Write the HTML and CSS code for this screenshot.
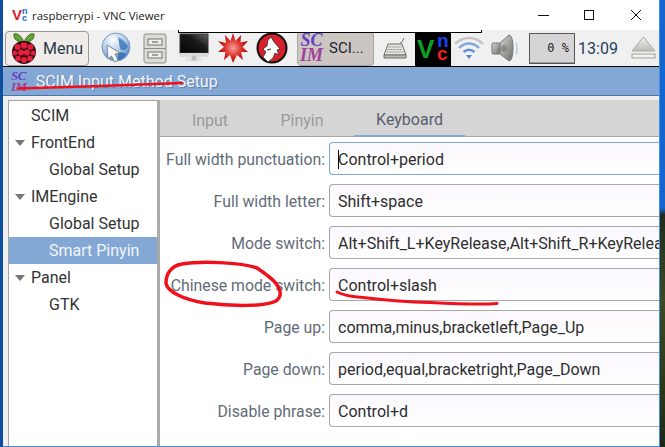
FILE: index.html
```html
<!DOCTYPE html>
<html>
<head>
<title>SCIM Input Method Setup</title>
<link rel="stylesheet" href="styles.css">
</head>
<body>
<div class="screen">
  <div class="vnc">
    <div class="titlebar">
      <span class="vnc-logo"><span class="vnc-v">V</span><span class="vnc-nc"><span>n</span><span>c</span></span></span>
      <span class="titlebar-text">raspberrypi - VNC Viewer</span>
      <div class="win-buttons">
        <svg width="46" height="20" viewBox="0 0 46 20"><path d="M0 10.5H11" stroke="#111" fill="none"/></svg>
        <svg width="46" height="20" viewBox="0 0 46 20"><rect x="0.5" y="5.5" width="9" height="9" stroke="#111" fill="none"/></svg>
        <svg width="12" height="20" viewBox="0 0 12 20"><path d="M1 5L11 15M11 5L1 15" stroke="#111" fill="none"/></svg>
      </div>
    </div>

    <div class="panel">
      <div class="remote-edge"></div>
      <button class="menu-btn">
        <svg width="26" height="33" viewBox="0 0 26 33">
          <path d="M13 10C10 3 6 1 3 2C2 7 7 11 13 10ZM13 10C16 3 20 1 23 2C24 7 19 11 13 10Z" fill="#62a632" stroke="#24470f" stroke-width="0.7"/>
          <path d="M13 9C20 9 25 13 25 20C25 27 19 32 13 32C7 32 1 27 1 20C1 13 6 9 13 9Z" fill="#2a0a0e"/>
          <g fill="#e41e3c">
            <circle cx="13" cy="13.500" r="3.300"/><circle cx="6.500" cy="15" r="3"/><circle cx="19.500" cy="15" r="3"/>
            <circle cx="3.800" cy="21" r="2.500"/><circle cx="22.200" cy="21" r="2.500"/><circle cx="10" cy="20.500" r="3.100"/>
            <circle cx="16" cy="20.500" r="3.100"/><circle cx="7" cy="26.500" r="2.800"/><circle cx="19" cy="26.500" r="2.800"/><circle cx="13" cy="28" r="3"/>
          </g>
        </svg>
        <span>Menu</span>
      </button>

      <div class="slot">
        <svg width="32" height="32" viewBox="0 0 32 32">
          <defs><radialGradient id="globe" cx="0.4" cy="0.25" r="0.85"><stop offset="0" stop-color="#ffffff"/><stop offset="0.55" stop-color="#a8c6e6"/><stop offset="1" stop-color="#2f6db4"/></radialGradient></defs>
          <circle cx="16" cy="15" r="14" fill="url(#globe)" stroke="#7f9dc0"/>
          <path d="M18 5C22 7 25 10 28 14C26 18 23 19 21 18C19 15 19 9 18 5Z" fill="#2f6db4" opacity="0.75"/>
          <path d="M18 20C22 20 25 21 26 22C24 26 21 27 18 28Z" fill="#2f6db4" opacity="0.8"/>
          <path d="M7 13L20 21L15 22L18 28L14.500 30L11.500 24L8 27Z" fill="#f6f6f6" stroke="#68727c" stroke-width="0.8"/>
        </svg>
      </div>
      <div class="slot">
        <svg width="24" height="31" viewBox="0 0 24 31">
          <rect x="1" y="1" width="22" height="29" rx="2" fill="#dcdcd6" stroke="#8d8d86"/>
          <path d="M1 15.500H23" stroke="#8d8d86"/>
          <rect x="5" y="6" width="14" height="6" fill="#eeeeea" stroke="#77776f"/>
          <rect x="5" y="19" width="14" height="6" fill="#eeeeea" stroke="#77776f"/>
          <path d="M9 9H15M9 22H15" stroke="#55554f"/>
        </svg>
      </div>
      <div class="slot">
        <svg width="30" height="30" viewBox="0 0 30 30">
          <defs><linearGradient id="scr" x1="0" y1="1" x2="1" y2="0"><stop offset="0" stop-color="#050505"/><stop offset="0.6" stop-color="#1a1a1a"/><stop offset="1" stop-color="#6a6a6a"/></linearGradient></defs>
          <rect x="1" y="1" width="28" height="19" fill="url(#scr)" stroke="#333"/>
          <rect x="1" y="20" width="28" height="4" fill="#dcdcdc"/>
          <ellipse cx="15" cy="26.500" rx="9" ry="2.500" fill="#e2e2e2"/>
          <circle cx="15" cy="25" r="2.500" fill="#bdbdbd"/>
        </svg>
      </div>
      <div class="slot">
        <svg width="32" height="32" viewBox="0 0 32 32">
          <defs><radialGradient id="burst"><stop offset="0" stop-color="#f4a09a"/><stop offset="0.6" stop-color="#dc2a26"/><stop offset="1" stop-color="#a80f10"/></radialGradient></defs>
          <path d="M16 1L18.500 9L24 3L23.500 10.500L31 9L25.500 15L31 20L24 20L26 28L20 23L16 31L13 23L7 28L8.500 20L1 20L7 15L1 9L9 11L8 3L13.500 9Z" fill="url(#burst)"/>
        </svg>
      </div>
      <div class="slot">
        <svg width="32" height="32" viewBox="0 0 32 32">
          <circle cx="16" cy="16" r="14.500" fill="#d8202c" stroke="#111" stroke-width="2"/>
          <path d="M15 5L18 10L24 17L21 18L23 23L19 21L17 26L12 30L7 25L10 20L7 17L11 14L12 8Z" fill="#fff" stroke="#222" stroke-width="0.7"/>
          <path d="M11 18L15 17" stroke="#222"/>
        </svg>
      </div>

      <button class="task-btn">
        <span class="scim-logo"><span>SC</span><span class="scim-im">IM</span></span>
        <span class="task-label">SCI...</span>
      </button>

      <div class="slot slot-keyboard">
        <svg width="24" height="22" viewBox="0 0 24 22">
          <path d="M17 6C20 6 20 2 21 1" stroke="#666" fill="none"/>
          <path d="M5 7H19L23 18H1Z" fill="#e6e6e2" stroke="#6e6e6a"/>
          <path d="M1 18H23V21H1Z" fill="#bcbcb6" stroke="#6e6e6a"/>
          <path d="M5.500 10H18.500M4.500 12.500H19.500M3.500 15H20.500" stroke="#8a8a84" stroke-dasharray="2 1"/>
        </svg>
      </div>

      <div class="vnc-tray">
        <span class="tray-v">V</span>
        <span class="tray-nc"><span class="tray-n">n</span><span class="tray-c">c</span></span>
      </div>

      <div class="slot slot-wifi">
        <svg width="30" height="26" viewBox="0 0 30 26">
          <path d="M1 9C9 1 21 1 29 9" stroke="#c4c4c4" stroke-width="2.400" fill="none"/>
          <path d="M5 13C11 7 19 7 25 13" stroke="#7ba6dc" stroke-width="2.400" fill="none"/>
          <path d="M9.500 17C13 14 17 14 20.500 17" stroke="#5f92d3" stroke-width="2.400" fill="none"/>
          <path d="M12 20H18L15 24Z" fill="#4f86cc"/>
        </svg>
      </div>
      <div class="slot slot-speaker">
        <svg width="28" height="28" viewBox="0 0 28 28">
          <defs><linearGradient id="spk" x1="0" y1="0" x2="1" y2="1"><stop offset="0" stop-color="#d8d8d4"/><stop offset="1" stop-color="#6c6c68"/></linearGradient></defs>
          <rect x="1" y="9" width="8" height="11" rx="1" fill="url(#spk)" stroke="#777"/>
          <path d="M9 9L18 1C21 1 22 8 22 14C22 20 21 27 18 27L9 20Z" fill="url(#spk)" stroke="#777"/>
          <ellipse cx="13" cy="14.500" rx="3" ry="3.500" fill="#8a8a86"/>
          <path d="M25 9C26.500 12 26.500 17 25 20" stroke="#a8c6ea" stroke-width="1.500" fill="none"/>
        </svg>
      </div>

      <div class="cpu">
        <span>0 %</span>
      </div>
      <div class="clock">13:09</div>
      <div class="eject">
        <svg width="25" height="24" viewBox="0 0 25 24">
          <defs><linearGradient id="ej" x1="0" y1="0" x2="0" y2="1"><stop offset="0" stop-color="#f2f2ee"/><stop offset="1" stop-color="#b8bcb4"/></linearGradient></defs>
          <path d="M12.500 1L24 15H1Z" fill="url(#ej)" stroke="#a8a8a4"/>
          <rect x="1" y="18" width="23" height="4" fill="#f0f0ec" stroke="#a0a09c"/>
        </svg>
      </div>
    </div>

    <div class="app-title">
      <span class="scim-logo scim-small"><span>SC</span><span class="scim-im">IM</span></span>
      <span class="app-title-text">SCIM Input Method Setup</span>
    </div>

    <div class="app-body">
      <div class="sidebar">
        <div class="tree-row"><span class="tree-text">SCIM</span></div>
        <div class="tree-row"><span class="arrow"></span><span class="tree-text">FrontEnd</span></div>
        <div class="tree-row tree-child"><span class="tree-text">Global Setup</span></div>
        <div class="tree-row"><span class="arrow"></span><span class="tree-text">IMEngine</span></div>
        <div class="tree-row tree-child"><span class="tree-text">Global Setup</span></div>
        <div class="tree-row tree-child selected"><span class="tree-text">Smart Pinyin</span></div>
        <div class="tree-row"><span class="arrow"></span><span class="tree-text">Panel</span></div>
        <div class="tree-row tree-child"><span class="tree-text">GTK</span></div>
      </div>

      <div class="content">
        <div class="tabs">
          <div class="tab tab-input">Input</div>
          <div class="tab tab-pinyin">Pinyin</div>
          <div class="tab tab-keyboard">Keyboard</div>
        </div>
        <div class="form">
          <div class="form-row">
            <label>Full width punctuation:</label>
            <div class="entry focused"><span class="caret"></span>Control+period</div>
          </div>
          <div class="form-row">
            <label>Full width letter:</label>
            <div class="entry">Shift+space</div>
          </div>
          <div class="form-row">
            <label>Mode switch:</label>
            <div class="entry">Alt+Shift_L+KeyRelease,Alt+Shift_R+KeyRelease</div>
          </div>
          <div class="form-row">
            <label>Chinese mode switch:</label>
            <div class="entry">Control+slash</div>
          </div>
          <div class="form-row">
            <label>Page up:</label>
            <div class="entry">comma,minus,bracketleft,Page_Up</div>
          </div>
          <div class="form-row">
            <label>Page down:</label>
            <div class="entry">period,equal,bracketright,Page_Down</div>
          </div>
          <div class="form-row">
            <label>Disable phrase:</label>
            <div class="entry">Control+d</div>
          </div>
        </div>
      </div>
    </div>
  </div>

  <!-- red pen marks drawn over the screenshot -->
  <svg class="marks" width="665" height="447" viewBox="0 0 665 447">
    <path d="M18 88.500C70 87 130 85 182 83" stroke="#f0101c" stroke-width="2.500" fill="none" stroke-linecap="round"/>
    <path d="M257 268C240 262 200 261 182 264C170 266 166 275 166 283C167 292 185 300 205 303C230 306 265 307 276 301C284 295 280 285 268 276C263 272 260 270 257 268" stroke="#f0101c" stroke-width="3.500" fill="none" stroke-linecap="round"/>
    <path d="M337 292C345 296 355 297 363 297.500C385 300 410 302 430 302.500C450 303.500 480 305 497 303.500" stroke="#f0101c" stroke-width="3" fill="none" stroke-linecap="round"/>
  </svg>
</div>
</body>
</html>
```

FILE: styles.css
```css
html, body {
  margin: 0;
  padding: 0;
  overflow: hidden;
}
body {
  width: 665px;
  height: 447px;
  font-family: Roboto, sans-serif;
  font-size: 16px;
  color: #333;
}
button {
  font: inherit;
  color: inherit;
  padding: 0;
}
.screen {
  position: relative;
  width: 665px;
  height: 447px;
  box-sizing: border-box;
  padding: 0 6px 0 3px;
  background:
    linear-gradient(to right, #0d4f9e 0, #0d4f9e 3px, transparent 3px),
    linear-gradient(to bottom, #1167cf 0, #1167cf 208px, #1d2a1e 215px, #3a4a26 300px, #2b3a1c 380px, #1a2a1a 447px);
}
.vnc {
  width: 656px;
  height: 446px;
  background: #efefef;
  display: flex;
  flex-direction: column;
  border-bottom: 1px solid #4a8be0;
  border-right: 1px solid #4a8be0;
  box-sizing: content-box;
  margin-right: -1px;
}

/* windows title bar */
.titlebar {
  height: 30px;
  background: #fff;
  display: flex;
  align-items: center;
  padding-left: 9px;
  flex-shrink: 0;
}
.vnc-logo {
  display: flex;
  width: 17px;
  font-family: "Liberation Sans", sans-serif;
  font-weight: bold;
}
.vnc-v {
  color: #d8202c;
  font-size: 15px;
  line-height: 16px;
}
.vnc-nc {
  display: flex;
  flex-direction: column;
  color: #2062c8;
  font-size: 9px;
  line-height: 7px;
  padding-top: 1px;
}
.titlebar-text {
  font-family: "Open Sans", sans-serif;
  font-size: 11.4px;
  color: #222;
  margin-left: 3px;
}
.win-buttons {
  margin-left: auto;
  display: flex;
  padding-right: 17px;
  align-items: center;
}

/* raspbian panel */
.panel {
  position: relative;
  height: 36px;
  background: #f0f0f0;
  border-bottom: 1px solid #000;
  display: flex;
  align-items: center;
  padding-left: 2px;
  flex-shrink: 0;
}
.remote-edge {
  position: absolute;
  left: 175px;
  top: 0;
  width: 304px;
  height: 3px;
  background: #fff;
  border: 1px solid #000;
  border-width: 0 1px 1px 1px;
  box-sizing: border-box;
}
.menu-btn {
  width: 84px;
  height: 35px;
  background: #efecea;
  border: 1px solid #9a9a96;
  border-radius: 4px;
  display: flex;
  align-items: center;
  padding-left: 5px;
  gap: 6px;
  box-sizing: border-box;
  color: #2b3a4a;
}
.slot {
  width: 39px;
  display: flex;
  justify-content: center;
  align-items: center;
}
.menu-btn + .slot {
  margin-left: 7px;
}
.task-btn {
  margin-left: 6px;
  width: 77px;
  height: 35px;
  background: #cbc6c2;
  border: 1px solid #aaa6a2;
  border-radius: 4px;
  display: flex;
  align-items: center;
  gap: 6px;
  padding-left: 2px;
  box-sizing: border-box;
  overflow: hidden;
}
.task-label {
  color: #223;
  font-size: 15px;
}
.scim-logo {
  display: flex;
  flex-direction: column;
  font-family: "Liberation Serif", serif;
  font-style: italic;
  font-weight: bold;
  font-size: 18px;
  line-height: 15px;
  color: #6a3fc8;
}
.scim-im {
  color: #a0409a;
}
.scim-small {
  font-size: 13px;
  line-height: 11px;
  letter-spacing: -0.5px;
}
.slot-keyboard {
  width: 41px;
}
.vnc-tray {
  width: 36px;
  height: 33px;
  align-self: flex-end;
  background: #000;
  display: flex;
  font-family: "Liberation Sans", sans-serif;
  font-weight: bold;
  overflow: hidden;
}
.tray-v {
  color: #0aa020;
  font-size: 26px;
  line-height: 33px;
  margin-left: 2px;
  width: 20px;
}
.tray-nc {
  display: flex;
  flex-direction: column;
  font-size: 19px;
  line-height: 13px;
  padding-top: 1px;
}
.tray-n {
  color: #2040f0;
}
.tray-c {
  color: #ee2020;
}
.slot-wifi {
  width: 36px;
}
.slot-speaker {
  width: 36px;
}
.cpu {
  margin-left: 6px;
  width: 46px;
  height: 31px;
  box-sizing: border-box;
  background: linear-gradient(to top, #9a989a 0, #9a989a 1px, #d6d4d6 1px);
  border: 1px solid #555;
  display: flex;
  align-items: center;
  justify-content: flex-end;
  padding-right: 5px;
  font-family: "DejaVu Sans Mono", monospace;
  font-size: 12px;
  color: #222;
  white-space: pre;
}
.clock {
  width: 46px;
  text-align: center;
  color: #24405f;
}
.eject {
  margin-left: 10px;
  display: flex;
}

/* setup window */
.app-title {
  height: 28px;
  background: #83a8d5;
  border-bottom: 1px solid #4a76a8;
  display: flex;
  align-items: center;
  padding-left: 8px;
  flex-shrink: 0;
}
.app-title-text {
  color: #f4f6fa;
  font-size: 16px;
  margin-left: 9px;
  text-shadow: 1px 1px 1px #5a7ca6;
}
.app-body {
  flex: 1;
  min-height: 0;
  display: flex;
  padding: 4px 0 0 5px;
}
.sidebar {
  width: 148px;
  background: #fff;
  border-top: 1px solid #a5a5a5;
  border-left: 1px solid #a5a5a5;
  border-right: 3px solid #aaa;
  flex-shrink: 0;
  padding-top: 1px;
}
.tree-row {
  height: 27px;
  display: flex;
  align-items: center;
  padding-left: 22px;
  color: #333;
}
.tree-child {
  padding-left: 40px;
}
.tree-row.selected {
  background: #83a8d5;
  color: #f2f5fa;
}
.arrow {
  width: 0;
  height: 0;
  border-left: 5px solid transparent;
  border-right: 5px solid transparent;
  border-top: 6px solid #777;
  margin-left: -16px;
  margin-right: 6px;
}
.content {
  flex: 1;
  min-width: 0;
  background: #fff;
  overflow: hidden;
}
.tabs {
  height: 37px;
  box-sizing: border-box;
  background: #d5d5d5;
  border-bottom: 1px solid #a8a8a8;
  display: flex;
  color: #9a9a9a;
}
.tab {
  height: 37px;
  box-sizing: border-box;
  display: flex;
  align-items: center;
  justify-content: center;
  padding-top: 3px;
}
.tab-input {
  width: 100px;
}
.tab-pinyin {
  width: 84px;
}
.tab-keyboard {
  margin-left: 10px;
  width: 111px;
  color: #55606c;
  border-bottom: 2px solid #83a8d5;
}
.form {
  padding-top: 5px;
  display: flex;
  flex-direction: column;
  gap: 9px;
}
.form-row {
  display: flex;
  height: 33px;
  align-items: center;
  white-space: nowrap;
}
.form-row label {
  width: 165px;
  text-align: right;
  color: #626c78;
  font-size: 15.8px;
  padding-right: 4px;
  padding-top: 1px;
  flex-shrink: 0;
}
.entry {
  width: 340px;
  height: 33px;
  box-sizing: border-box;
  line-height: 33px;
  padding-left: 8px;
  border: 1px solid #a8a8a8;
  border-right: 0;
  border-radius: 4px 0 0 4px;
  background: linear-gradient(to bottom, #fbf8fd 0, #fdfbfe 50%, #fff 100%);
  color: #2e2e2e;
  overflow: hidden;
  flex-shrink: 0;
}
.entry.focused {
  border-color: #83a8d5;
}
.caret {
  display: inline-block;
  width: 1px;
  height: 19px;
  margin-right: -1px;
  background: #000;
  vertical-align: -4px;
}
.marks {
  position: absolute;
  left: 0;
  top: 0;
  pointer-events: none;
}
```
